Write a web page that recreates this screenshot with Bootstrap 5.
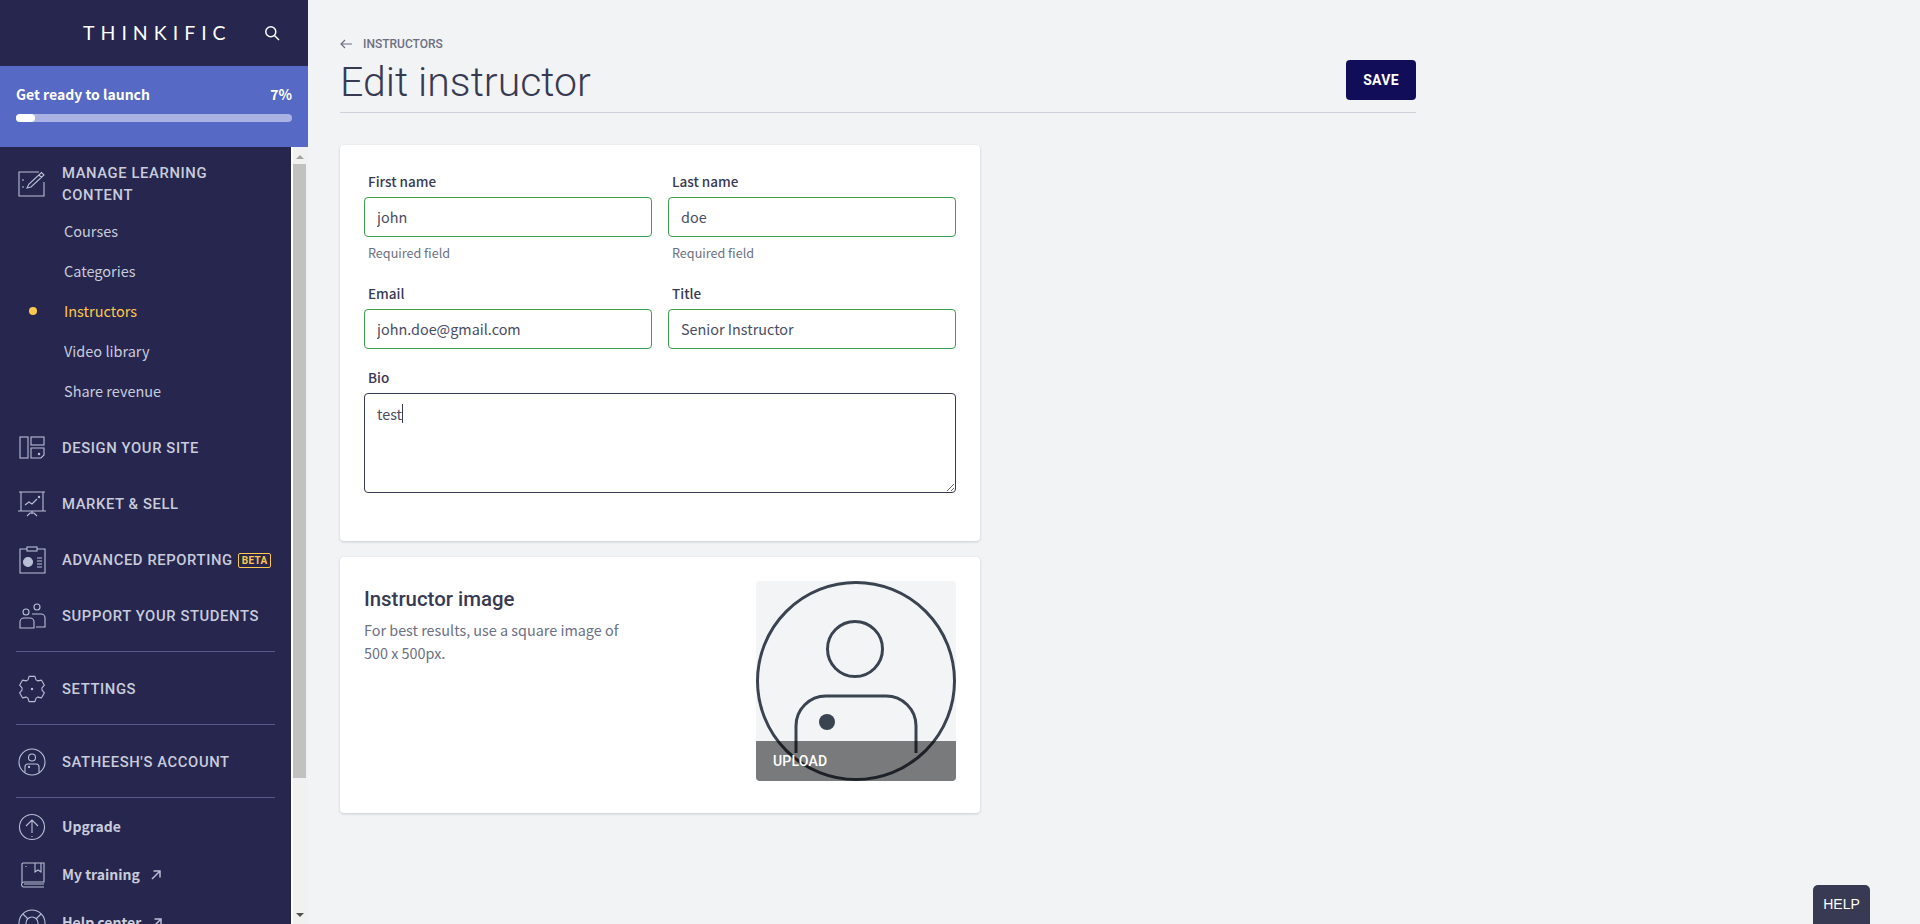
<!DOCTYPE html>
<html>
    <head>
        <title>Edit instructor</title>
        <link href="https://cdn.jsdelivr.net/npm/bootstrap@5.3.2/dist/css/bootstrap.min.css" rel="stylesheet">
        <script src="https://cdn.jsdelivr.net/npm/bootstrap@5.3.2/dist/js/bootstrap.bundle.min.js"></script>
        <style>
            body { height: 924px; overflow: hidden; background: #f2f3f5; color: #383a53; font-family: "Noto Sans CJK SC", "Liberation Sans", sans-serif; font-size: 14.4px; }
            .side { width: 308px; height: 924px; flex: none; background: #26264f; }
            .side-top { height: 66px; padding: 0 28px 0 83px; color: #fff; }
            .logo { font-family: Lato, sans-serif; font-weight: 400; font-size: 19.5px; letter-spacing: 6px; line-height: 1; }
            .launch { height: 81px; padding: 18px 16px 0; background: #5569c5; color: #fff; font-weight: 700; font-size: 14px; line-height: 20px; }
            .launch-bar { height: 8px; margin-top: 10px; border-radius: 4px; background: #a9b2e2; }
            .launch-fill { height: 8px; border-radius: 4px; background: #fff; }
            .side-body { height: 777px; overflow: hidden; }
            .side-nav { width: 291px; flex: none; padding-top: 15px; }
            .fake-scroll { width: 17px; background: #f1f1f1; border-left: 2px solid #fff; padding: 0 2px 0 0; }
            .thumb { height: 614px; margin: 17px 0 0; background: #c1c1c1; }
            .arrow-up, .arrow-down { width: 0; height: 0; border-left: 4px solid transparent; border-right: 4px solid transparent; position: absolute; left: 296px; }
            .arrow-up { top: 155px; border-bottom: 4px solid #a3a3a3; }
            .arrow-down { top: 913px; border-top: 4px solid #505050; }
            .nav-head { display: flex; align-items: center; padding-left: 18px; font-family: Roboto, sans-serif; font-weight: 500; font-size: 14.8px; letter-spacing: .6px; line-height: 22px; color: #c9ccda; text-transform: uppercase; text-decoration: none; }
            .nav-head svg, .nav-low svg { width: 28px; height: 28px; flex: none; margin-right: 16px; fill: none; stroke: #b9c0d6; stroke-width: 1.1; }
            .nav-row { height: 56px; padding-top: 2px; }
            .nav-row.wide { height: 72px; padding-top: 1px; }
            .sub-list { margin: 5px 0 8px; }
            .nav-sub { display: block; position: relative; padding-left: 64px; height: 40px; line-height: 40px; color: #c9ccda; font-size: 14.5px; text-decoration: none; }
            .nav-sub.on { color: #fdc84b; }
            .nav-sub.on::before { content: ""; position: absolute; left: 29px; top: 16px; width: 8px; height: 8px; border-radius: 50%; background: #fdc84b; }
            .nav-rule { height: 1px; margin: 0 16px; background: #56598a; }
            .nav-rule.first { margin-top: 8px; }
            .beta { margin-left: 5px; padding: 0 3px; border: 1px solid #fdc84b; border-radius: 2px; color: #fdc84b; font-size: 10px; line-height: 13px; letter-spacing: .3px; font-weight: 700; }
            .low-list { margin-top: 5px; }
            .nav-low { display: flex; align-items: center; padding: 0 0 1px 18px; color: #c9ccda; font-weight: 700; font-size: 14px; text-decoration: none; height: 48px; }
            .nav-low svg.ext { margin-left: 11px; width: 10px; height: 10px; stroke-width: 1.5; margin-right: 0; }
            .page { width: 1076px; margin-left: 32px; }
            .back { padding-top: 33px; font-family: Roboto, sans-serif; font-weight: 500; font-size: 12px; line-height: 22px; color: #6b7082; }
            .back svg { width: 12px; height: 10px; margin: 0 11px 0 0; vertical-align: -0.5px; fill: none; stroke: #6b7082; stroke-width: 1.2; }
            .page-head { height: 58px; border-bottom: 1px solid #cfd1da; }
            .page-title { font-family: Roboto, sans-serif; font-weight: 300; font-size: 41px; line-height: 48px; margin: 0 0 4px; color: #383a53; }
            .btn-save { width: 70px; height: 40px; align-self: flex-start; margin-top: 5px; padding: 0; background: #110d59; border: 0; border-radius: 4px; color: #fff; font-family: Roboto, sans-serif; font-weight: 700; font-size: 14px; letter-spacing: .3px; }
            .box { width: 640px; border: 0; border-radius: 4px; box-shadow: 0 1px 3px rgba(40,44,80,.2); }
            .box-form { height: 396px; margin-top: 32px; padding: 27px 24px 0; }
            .box-image { height: 256px; margin-top: 16px; padding: 24px; }
            .field-label { display: block; margin: 0 0 7px 4px; font-weight: 500; font-size: 13.5px; line-height: 18px; color: #383a53; }
            .field-input { height: 40px; padding: 0 12px 2px; border: 1px solid #3c9d50; border-radius: 4px; font-size: 14.4px; color: #4a4d63; box-shadow: none; }
            .field-note { margin: 7px 0 0 4px; font-size: 12.6px; line-height: 17px; color: #6b7082; }
            .row-second { margin-top: 23px; }
            .row-bio { margin-top: 19px; }
            .field-text { display: block; width: 592px; height: 100px; padding: 9px 12px; border: 1px solid #383a53; border-radius: 4px; font-size: 14.4px; line-height: 22px; color: #4a4d63; }
            .caret-wrap { position: relative; }
            .caret-bar { position: absolute; left: 38px; top: 11px; width: 1px; height: 19px; background: #383a53; }
            .image-title { font-family: Roboto, sans-serif; font-weight: 500; font-size: 20.4px; line-height: 28px; margin: 4px 0 5px; color: #383a53; }
            .image-note { width: 270px; margin: 0; font-size: 14.4px; line-height: 23px; color: #6b7082; }
            .avatar { position: relative; width: 200px; height: 200px; flex: none; overflow: hidden; border-radius: 4px; background: #f3f4f6; }
            .avatar svg { display: block; width: 200px; height: 200px; fill: none; stroke: #3a4350; stroke-width: 3; }
            .avatar-band { position: absolute; left: 0; right: 0; bottom: 0; height: 40px; padding-left: 17px; background: rgba(0,0,0,.5); color: #fff; font-family: Roboto, sans-serif; font-weight: 500; font-size: 14px; letter-spacing: .2px; line-height: 40px; }
            .help-tab { position: absolute; right: 50px; bottom: 0; width: 57px; height: 39px; border-radius: 5px 5px 0 0; background: #383a53; color: #fff; font-family: "Liberation Sans", sans-serif; font-size: 14px; line-height: 39px; text-align: center; }
        </style>
    </head>
    <body>
        <div class="d-flex">
            <aside class="side">
                <div class="side-top d-flex align-items-center justify-content-between">
                    <span class="logo">THINKIFIC</span>
                    <svg width="16" height="16" viewBox="0 0 16 16" fill="none" stroke="#fff" stroke-width="1.5"><circle cx="6.8" cy="6.8" r="5"/><path d="M10.5 10.5 15 15"/></svg>
                </div>
                <div class="launch">
                    <div class="d-flex justify-content-between"><span>Get ready to launch</span><span>7%</span></div>
                    <div class="launch-bar"><div class="launch-fill" style="width: 7%"></div></div>
                </div>
                <div class="side-body d-flex">
                    <div class="side-nav">
                        <a class="nav-head" href="#"><svg viewBox="0 0 28 28"><path d="M26 12V26H1V2h20"/><path d="M4 10h2M4 17h2M9 18l4-1L26 5l-2.500-2.500L11 14zM21 5l2.500 2.500"/></svg><span>Manage learning<br>content</span></a>
                        <div class="sub-list">
                            <a class="nav-sub" href="#">Courses</a>
                            <a class="nav-sub" href="#">Categories</a>
                            <a class="nav-sub on" href="#">Instructors</a>
                            <a class="nav-sub" href="#">Video library</a>
                            <a class="nav-sub" href="#">Share revenue</a>
                        </div>
                        <a class="nav-head nav-row" href="#"><svg viewBox="0 0 28 28"><rect x="2" y="3" width="8" height="21"/><rect x="13" y="3" width="13" height="8"/><path d="M13 14h13v7l-3 3H13z"/><circle cx="21" cy="20" r=".7"/></svg>Design your site</a>
                        <a class="nav-head nav-row" href="#"><svg viewBox="0 0 28 28"><path d="M1 2h26M3 2v19M25 2v19M0 21h28M14 21v3M9 26l3-3h4l3 3M7 15l4-3 3 2 5-5"/><circle cx="21" cy="7" r=".7"/></svg>Market &amp; sell</a>
                        <a class="nav-head nav-row" href="#"><svg viewBox="0 0 28 28"><path d="M9 3H2v24h25V3h-8"/><rect x="9" y="1" width="10" height="4"/><path d="M19 12h5M19 15h5M19 18h5M19 21h5"/><circle cx="10" cy="16" r="4.500" fill="#b9c0d6"/></svg>Advanced reporting<span class="beta">BETA</span></a>
                        <a class="nav-head nav-row" href="#"><svg viewBox="0 0 28 28"><circle cx="8" cy="10" r="3"/><circle cx="19" cy="5" r="3"/><path d="M2 26v-6a4 4 0 0 1 4-4h6a4 4 0 0 1 4 4v6zM14 12h9a4 4 0 0 1 4 4v9H18"/></svg>Support your students</a>
                        <div class="nav-rule first"></div>
                        <a class="nav-head nav-row wide" href="#"><svg viewBox="0 0 28 28" stroke-linejoin="round"><path d="M9.930 4.860 11.100 1.330H16.900L18.070 4.860 19.880 5.900 23.520 5.150 26.420 10.180 23.950 12.950V15.050L26.420 17.820 23.520 22.850 19.880 22.100 18.070 23.140 16.900 26.670H11.100L9.930 23.140 8.120 22.100 4.480 22.850 1.580 17.820 4.050 15.050V12.950L1.580 10.180 4.480 5.150 8.120 5.900z"/><circle cx="14" cy="14" r=".7"/></svg>Settings</a>
                        <div class="nav-rule"></div>
                        <a class="nav-head nav-row wide" href="#"><svg viewBox="0 0 28 28"><circle cx="14" cy="14" r="13"/><circle cx="14" cy="9.500" r="3.500"/><path d="M7 24v-5a3 3 0 0 1 3-3h8a3 3 0 0 1 3 3v5"/><circle cx="11" cy="19" r=".6"/></svg>Satheesh's account</a>
                        <div class="nav-rule"></div>
                        <div class="low-list">
                            <a class="nav-low" href="#"><svg viewBox="0 0 28 28"><circle cx="14" cy="14" r="12.500"/><path d="M14 20V7M8 13l6-6 6 6M14 23v1"/></svg>Upgrade</a>
                            <a class="nav-low" href="#"><svg viewBox="0 0 28 28"><path d="M4 22V3a1 1 0 0 1 1-1h21v19H6a2.500 2.500 0 0 0-2 4 2 2 0 0 0 2 1h20M6 23h20M17 2v9l3-2 3 2V2M8 5v1"/></svg>My training<svg class="ext" viewBox="0 0 10 10"><path d="M1 9 9 1M2.500 1H9v6.500"/></svg></a>
                            <a class="nav-low" href="#"><svg viewBox="0 0 28 28"><circle cx="14" cy="14" r="13"/><circle cx="14" cy="14" r="6"/><path d="M5 5l5 5M23 5l-5 5M5 23l5-5M23 23l-5-5"/></svg>Help center<svg class="ext" viewBox="0 0 10 10"><path d="M1 9 9 1M2.500 1H9v6.500"/></svg></a>
                        </div>
                    </div>
                    <div class="fake-scroll flex-grow-1"><div class="thumb"></div></div>
                </div>
            </aside>
            <div class="arrow-up"></div>
            <div class="arrow-down"></div>

            <main class="page">
                <div class="back"><svg viewBox="0 0 12 10"><path d="M12 5H1M5 1 1 5l4 4"/></svg>INSTRUCTORS</div>
                <div class="page-head d-flex align-items-center justify-content-between">
                    <h1 class="page-title">Edit instructor</h1>
                    <button class="btn-save btn">SAVE</button>
                </div>

                <div class="card box box-form">
                    <div class="row gx-3">
                        <div class="col-6">
                            <label class="field-label">First name</label>
                            <input class="form-control field-input" value="john">
                            <div class="field-note">Required field</div>
                        </div>
                        <div class="col-6">
                            <label class="field-label">Last name</label>
                            <input class="form-control field-input" value="doe">
                            <div class="field-note">Required field</div>
                        </div>
                    </div>
                    <div class="row gx-3 row-second">
                        <div class="col-6">
                            <label class="field-label">Email</label>
                            <input class="form-control field-input" value="john.doe@gmail.com">
                        </div>
                        <div class="col-6">
                            <label class="field-label">Title</label>
                            <input class="form-control field-input" value="Senior Instructor">
                        </div>
                    </div>
                    <div class="row-bio">
                        <label class="field-label">Bio</label>
                        <div class="caret-wrap">
                            <textarea class="field-text">test</textarea>
                            <span class="caret-bar"></span>
                        </div>
                    </div>
                </div>

                <div class="card box box-image flex-row justify-content-between">
                    <div>
                        <h2 class="image-title">Instructor image</h2>
                        <p class="image-note">For best results, use a square image of 500 x 500px.</p>
                    </div>
                    <div class="avatar">
                        <svg viewBox="0 0 200 200"><circle cx="100" cy="100" r="98.500"/><circle cx="99" cy="68" r="27.500"/><path d="M40 172v-27a30 30 0 0 1 30-30h60a30 30 0 0 1 30 30v27"/><circle cx="71" cy="141" r="8" fill="#3a4350" stroke="none"/></svg>
                        <div class="avatar-band">UPLOAD</div>
                    </div>
                </div>
            </main>
        </div>
        <div class="help-tab">HELP</div>
    </body>
</html>
